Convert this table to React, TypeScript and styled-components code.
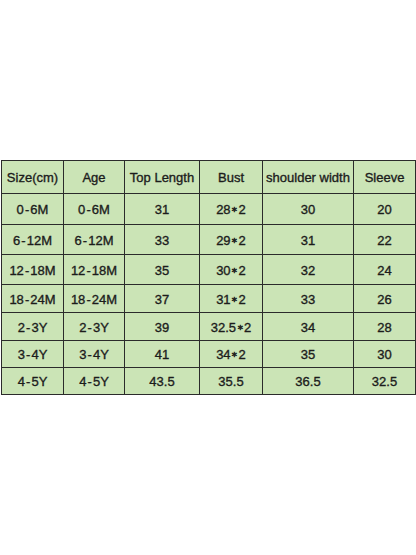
import styled, { createGlobalStyle } from 'styled-components';

const GlobalStyle = createGlobalStyle`
  html, body {
    margin: 0;
    padding: 0;
    background: #ffffff;
  }
  body {
    width: 416px;
    height: 555px;
    overflow: hidden;
    font-family: 'Liberation Sans', Arial, sans-serif;
  }
`;

const Page = styled.div`
  width: 416px;
  height: 555px;
  padding-top: 160px;
  padding-left: 1px;
  box-sizing: border-box;
`;

const SizeTable = styled.div`
  display: grid;
  grid-template-columns: 61px 60px 74px 62px 90px 61px;
  grid-template-rows: 32px 30px 29px 29px 27px 27px 26px 26px;
  gap: 1px;
  padding: 1px;
  width: max-content;
  background: #2b2b2b;
`;

const Cell = styled.div<{ $head?: boolean }>`
  display: flex;
  align-items: center;
  justify-content: center;
  padding-top: ${({ $head }) => ($head ? '0' : '1px')};
  background: #cbe4b6;
  color: #1c1c1c;
  font-size: 13px;
  font-weight: 400;
  white-space: nowrap;
  -webkit-text-stroke: 0.35px #1c1c1c;
`;

const Times = styled.span`
  font-size: 8px;
  margin: 0 0.5px;
  -webkit-text-stroke: 0.5px #1c1c1c;
`;

const headers = ['Size(cm)', 'Age', 'Top Length', 'Bust', 'shoulder width', 'Sleeve'];

const rows = [
  ['0-6M', '0-6M', '31', '28*2', '30', '20'],
  ['6-12M', '6-12M', '33', '29*2', '31', '22'],
  ['12-18M', '12-18M', '35', '30*2', '32', '24'],
  ['18-24M', '18-24M', '37', '31*2', '33', '26'],
  ['2-3Y', '2-3Y', '39', '32.5*2', '34', '28'],
  ['3-4Y', '3-4Y', '41', '34*2', '35', '30'],
  ['4-5Y', '4-5Y', '43.5', '35.5', '36.5', '32.5'],
];

// 하이픈 앞뒤를 살짝 띄우고, 곱셈 별표는 작게 표시
const renderValue = (value: string) => {
  const [left, right] = value.replace(/-/g, '\u200a-\u200a').split('*');
  if (right === undefined) return left;
  return (
    <>
      {left}
      <Times>{'\u2217'}</Times>
      {right}
    </>
  );
};

const App: React.FC = () => {
  return (
    <>
      <GlobalStyle />
      <Page>
        <SizeTable>
          {headers.map((title) => (
            <Cell key={title} $head>
              {title}
            </Cell>
          ))}
          {rows.map((row, rowIndex) =>
            row.map((value, colIndex) => (
              <Cell key={`${rowIndex}-${colIndex}`}>{renderValue(value)}</Cell>
            ))
          )}
        </SizeTable>
      </Page>
    </>
  );
};

export default App;
